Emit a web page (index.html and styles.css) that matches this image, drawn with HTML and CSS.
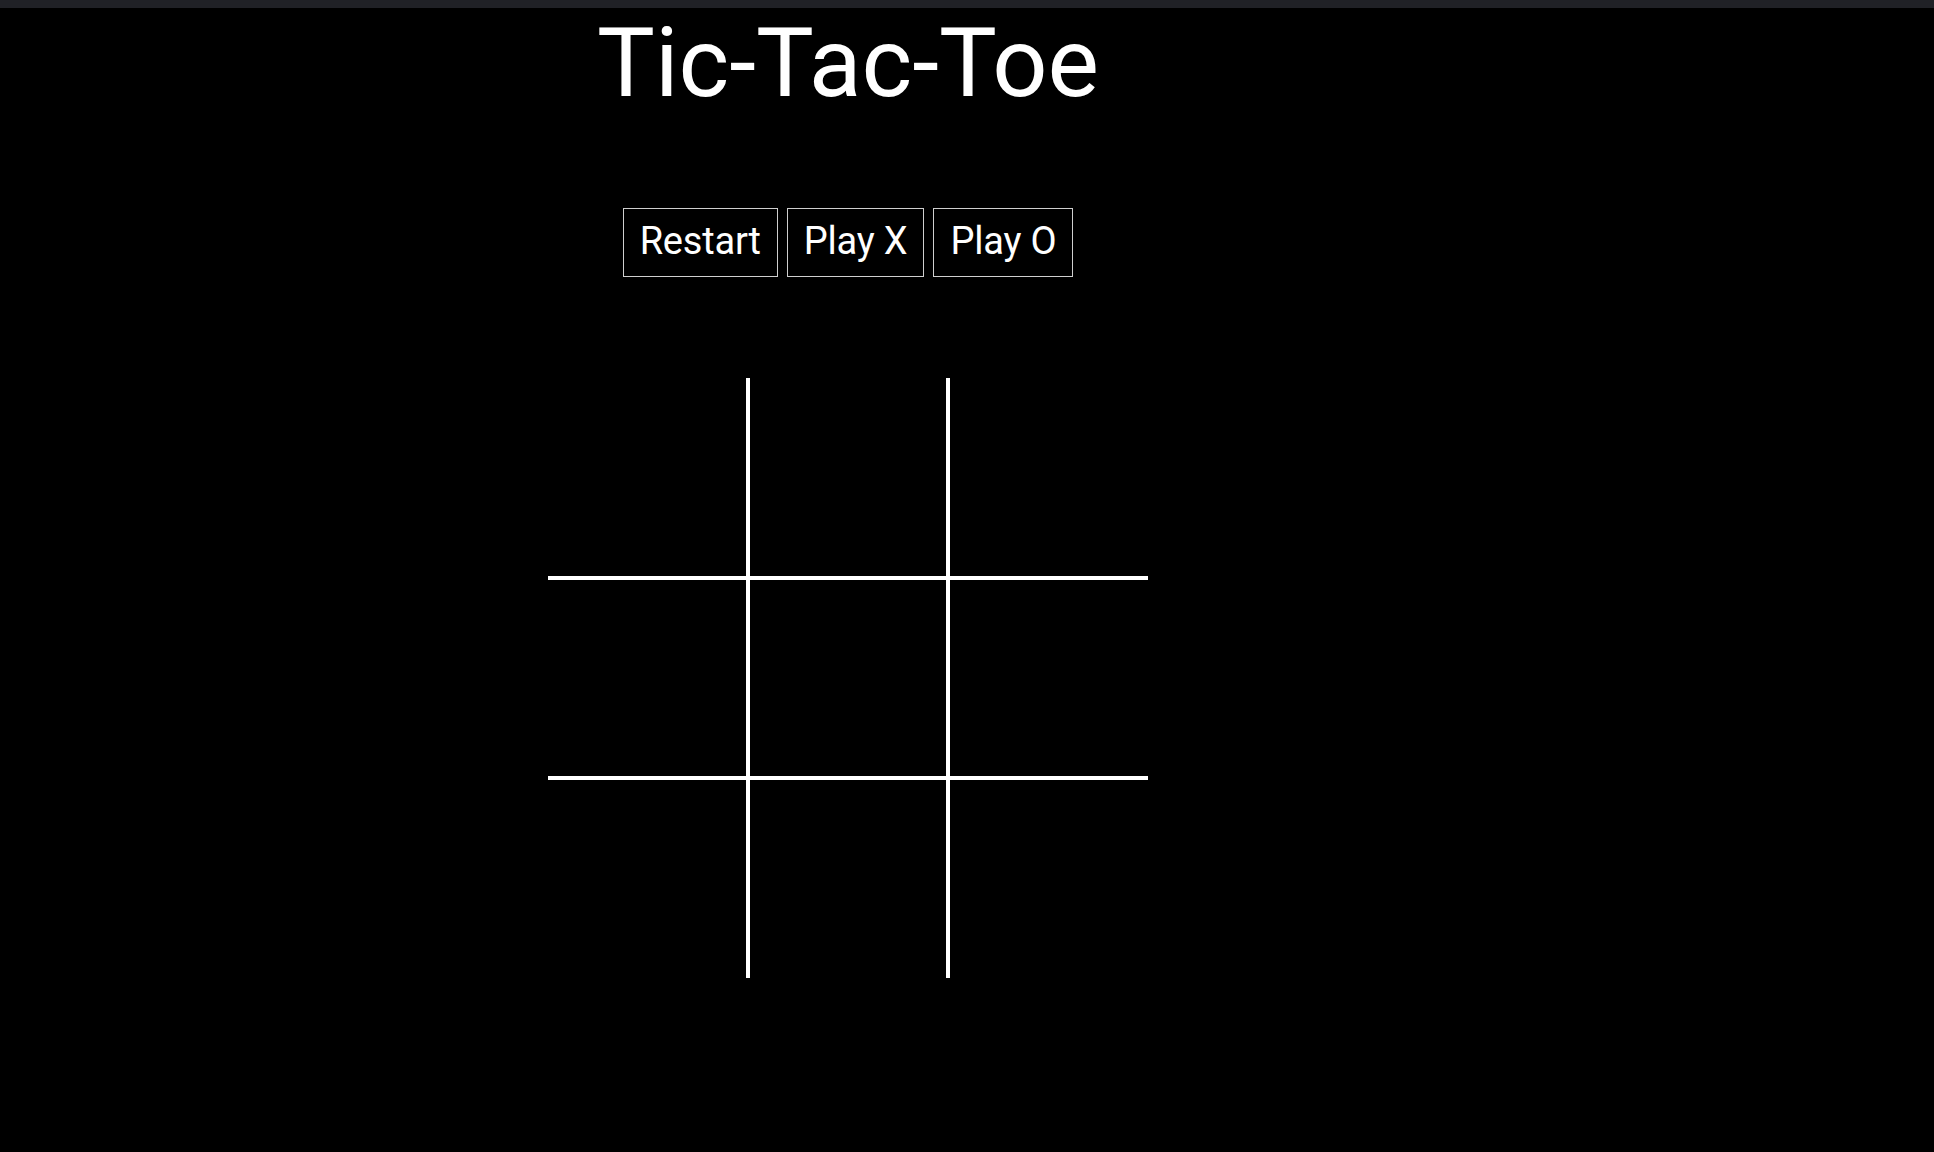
FILE: index.html
```html
<!DOCTYPE html>
<html lang="en">
<head>
<meta charset="utf-8">
<title>Tic-Tac-Toe</title>
<link rel="stylesheet" href="styles.css">
</head>
<body>
<div class="topbar"></div>
<main class="app">
  <h1 class="title">Tic-Tac-Toe</h1>
  <div class="controls">
    <button class="btn">Restart</button>
    <button class="btn">Play X</button>
    <button class="btn">Play O</button>
  </div>
  <div class="board">
    <div class="cell"></div>
    <div class="cell"></div>
    <div class="cell"></div>
    <div class="cell"></div>
    <div class="cell"></div>
    <div class="cell"></div>
    <div class="cell"></div>
    <div class="cell"></div>
    <div class="cell"></div>
  </div>
</main>
</body>
</html>
```
FILE: styles.css
```css
html, body {
  margin: 0;
  padding: 0;
  background: #000;
  color: #fff;
  font-family: Roboto, "Noto Sans", sans-serif;
}

.topbar {
  height: 8px;
  background: #202126;
}

.app {
  width: 1696px;
  display: flex;
  flex-direction: column;
  align-items: center;
}

.title {
  margin: 0;
  font-size: 97px;
  font-weight: 400;
  line-height: 110px;
}

.controls {
  display: flex;
  gap: 9px;
  margin-top: 90px;
}

.btn {
  font-family: Roboto, "Noto Sans", sans-serif;
  font-size: 38px;
  line-height: 65px;
  padding: 0 16px 2px;
  background: #000;
  color: #fff;
  border: 1px solid #cfcfcf;
  border-radius: 0;
  margin: 0;
  letter-spacing: -0.2px;
}

.board {
  margin-top: 101px;
  display: grid;
  grid-template-columns: repeat(3, 200px);
  grid-template-rows: repeat(3, 200px);
}

.cell {
  box-sizing: border-box;
  border: 2px solid #fff;
}

.cell:nth-child(-n+3) { border-top: none; }
.cell:nth-child(n+7) { border-bottom: none; }
.cell:nth-child(3n+1) { border-left: none; }
.cell:nth-child(3n) { border-right: none; }
```
